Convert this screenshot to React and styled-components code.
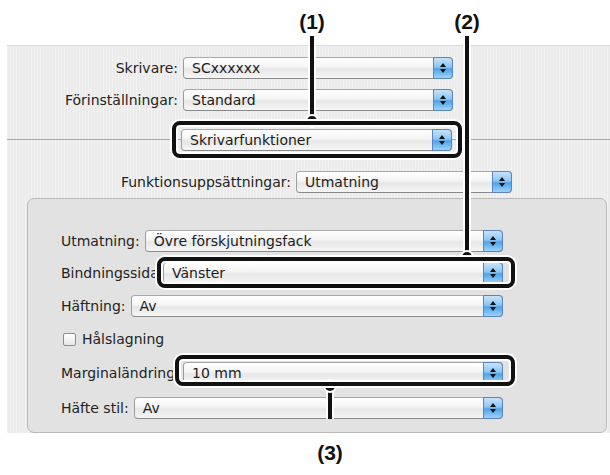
import React from 'react'
import styled, { createGlobalStyle } from 'styled-components'

const Global = createGlobalStyle`
body{
    margin:0;
    background:#fff;
    font-family:"DejaVu Sans","Liberation Sans",sans-serif;
}
`

const Page = styled.div`
position:relative;
width:610px;
height:475px;
padding-top:45px;
box-sizing:border-box;
overflow:hidden;
`

const Dialog = styled.div`
margin-left:7px;
height:388px;
box-sizing:border-box;
background:
    repeating-linear-gradient(90deg, rgba(255,255,255,.35) 0 1px, transparent 1px 3px),
    #ebebeb;
border-top:1px solid #dadada;
padding-top:11px;
`

const Row = styled.div`
display:flex;
align-items:center;
height:22px;
margin-top:${p=>p.mt||0}px;
`

const Label = styled.div`
font-size:14px;
color:#222;
white-space:nowrap;
text-align:${p=>p.right ? "right" : "left"};
width:${p=>p.w ? p.w+"px" : "auto"};
flex-shrink:0;
`

const Separator = styled.div`
position:relative;
height:22px;
margin-top:18px;
display:flex;
align-items:center;
&::before{
    content:"";
    position:absolute;
    left:0;
    right:0;
    top:10px;
    border-top:1px solid #a8a8a8;
}
`

const Popup = styled.div`
position:relative;
display:flex;
align-items:center;
height:22px;
box-sizing:border-box;
width:${p=>p.w ? p.w+"px" : "auto"};
flex:${p=>p.w ? "none" : "1"};
margin-left:${p=>p.ml ?? 5}px;
border:1px solid #9c9c9c;
border-top-color:#a8a8a8;
border-bottom-color:#8a8a8a;
border-radius:4px;
background:linear-gradient(#ffffff 0%, #f4f4f4 45%, #e6e6e6 55%, #f6f6f6 100%);
font-size:14px;
color:#1c1c1c;
padding-left:8px;
white-space:nowrap;
`

const Stepper = styled.div`
position:absolute;
right:-1px;
top:-1px;
bottom:-1px;
width:20px;
border:1px solid #5a83c0;
border-radius:0 4px 4px 0;
background:linear-gradient(#c6e3fb 0%, #8cc6f2 45%, #4fa3ea 55%, #9ad4fa 100%);
display:flex;
align-items:center;
justify-content:center;
box-sizing:border-box;
`

const Group = styled.div`
margin:5px 3px 0 20px;
height:235px;
box-sizing:border-box;
border:1px solid #b9b9b9;
border-radius:7px;
background:#e2e2e2;
padding:31px 103px 0 33px;
`

const Check = styled.span`
width:13px;
height:13px;
box-sizing:border-box;
border:1px solid #8d8d8d;
border-radius:2px;
background:linear-gradient(#ffffff,#e6e6e6);
margin:0 6px 0 2px;
`

const Overlay = styled.div`
position:absolute;
left:0;
top:0;
width:610px;
height:475px;
pointer-events:none;
`

const Callout = styled.div`
position:absolute;
font-family:"Liberation Sans Narrow","Liberation Sans",Arial,sans-serif;
font-weight:bold;
font-size:21px;
color:#111;
transform:translateX(-50%);
left:${p=>p.x}px;
top:${p=>p.y}px;
`

const Frame = styled.div`
position:absolute;
left:${p=>p.x}px;
top:${p=>p.y}px;
width:${p=>p.w}px;
height:${p=>p.h}px;
box-sizing:border-box;
border:4px solid #111;
border-radius:8px;
box-shadow:0 0 0 2px #fff, inset 0 0 0 2px #fff;
`

const Arrows = () => (
    <svg width="8" height="12" viewBox="0 0 8 12">
        <path d="M4 1 L7 5 L1 5 Z" fill="#111"/>
        <path d="M4 11 L7 7 L1 7 Z" fill="#111"/>
    </svg>
)

const Select = ({children,w,ml}) => (
    <Popup w={w} ml={ml}>
        {children}
        <Stepper><Arrows/></Stepper>
    </Popup>
)

const Leader = ({x,y1,y2,dot}) => (
    <svg style={{position:"absolute",left:0,top:0}} width="610" height="475">
        <line x1={x} y1={y1} x2={x} y2={y2} stroke="#fff" strokeWidth="8"/>
        <line x1={x} y1={y1} x2={x} y2={y2} stroke="#111" strokeWidth="4"/>
        <circle cx={x} cy={dot} r="7" fill="#fff"/>
        <circle cx={x} cy={dot} r="5" fill="#111"/>
    </svg>
)

export default function App(){
    return (
        <Page>
            <Global/>
            <Dialog>
                <Row>
                    <Label right w={171}>Skrivare:</Label>
                    <Select w={270}>SCxxxxxx</Select>
                </Row>
                <Row mt={10}>
                    <Label right w={171}>Förinställningar:</Label>
                    <Select w={270}>Standard</Select>
                </Row>
                <Separator>
                    <Label w={174}/>
                    <Select w={271} ml={0}>Skrivarfunktioner</Select>
                </Separator>
                <Row mt={20}>
                    <Label right w={284}>Funktionsuppsättningar:</Label>
                    <Select w={216}>Utmatning</Select>
                </Row>
                <Group>
                    <Row>
                        <Label>Utmatning:</Label>
                        <Select>Övre förskjutningsfack</Select>
                    </Row>
                    <Row mt={10}>
                        <Label w={97}>Bindningssida:</Label>
                        <Select>Vänster</Select>
                    </Row>
                    <Row mt={11}>
                        <Label>Häftning:</Label>
                        <Select>Av</Select>
                    </Row>
                    <Row mt={11}>
                        <Check/>
                        <Label>Hålslagning</Label>
                    </Row>
                    <Row mt={12}>
                        <Label w={117}>Marginaländring:</Label>
                        <Select>10 mm</Select>
                    </Row>
                    <Row mt={13}>
                        <Label>Häfte stil:</Label>
                        <Select>Av</Select>
                    </Row>
                </Group>
            </Dialog>
            <Overlay>
                <Leader x={312} y1={36} y2={120} dot={121}/>
                <Leader x={467} y1={36} y2={256} dot={257}/>
                <Leader x={330} y1={386} y2={419} dot={386}/>
                <Frame x={172} y={121} w={290} h={37}/>
                <Frame x={157} y={257} w={358} h={31}/>
                <Frame x={175} y={355} w={340} h={31}/>
                <Callout x={312} y={10}>(1)</Callout>
                <Callout x={467} y={10}>(2)</Callout>
                <Callout x={330} y={441}>(3)</Callout>
            </Overlay>
        </Page>
    )
}
